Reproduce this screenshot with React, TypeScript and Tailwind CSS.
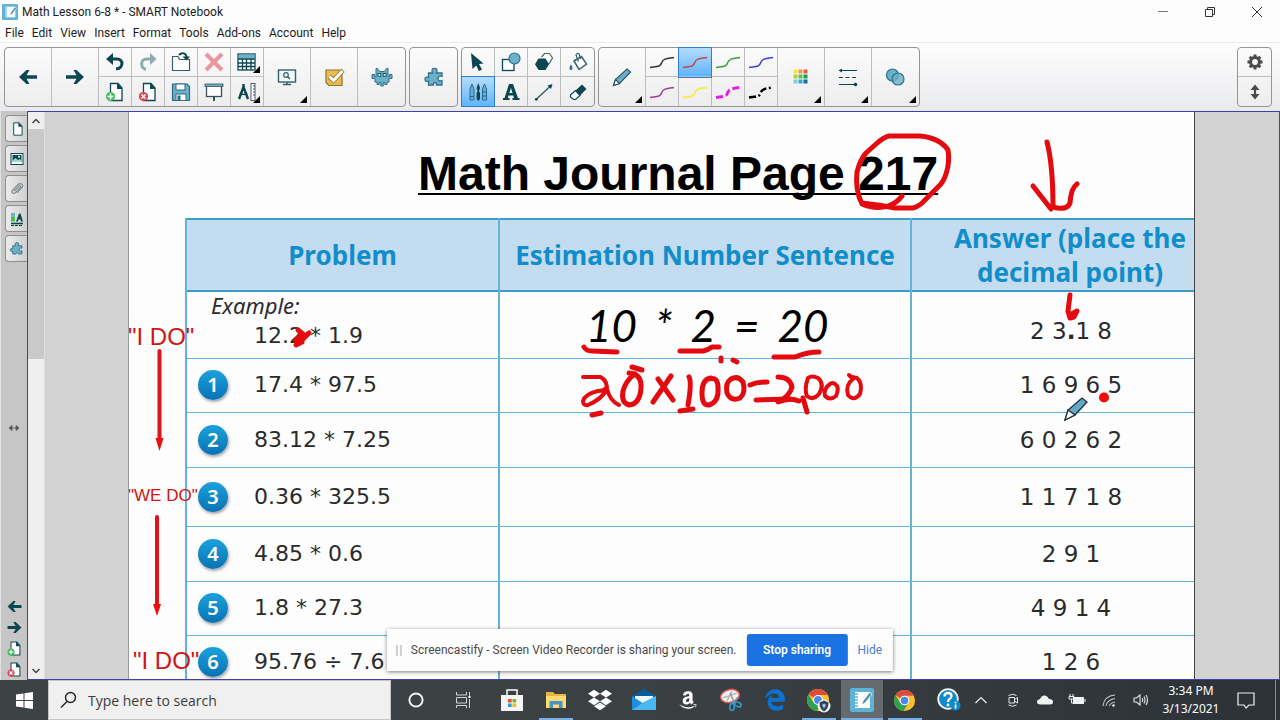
import type { ReactNode } from "react";
import { FaAmazon, FaDropbox } from "react-icons/fa";
import { FaEdgeLegacy } from "react-icons/fa6";

const DARK = "#0b4651";
const SKY = "#6cb0ca";

type IconProps = { children: ReactNode; size?: number; box?: number };

function Icon({ children, size = 22, box = 22 }: IconProps) {
  return (
    <svg aria-hidden="true" width={size} height={size} viewBox={`0 0 ${box} ${box}`} fill="none" className="shrink-0">
      {children}
    </svg>
  );
}

const ArrowLeft = ({ size = 22 }: { size?: number }) => (
  <Icon size={size}>
    <path d="M2 11 L9.5 4 H12.5 L9.5 9.2 H20 V12.8 H9.5 L12.5 18 H9.5 Z" fill={DARK} />
  </Icon>
);
const ArrowRight = ({ size = 22 }: { size?: number }) => (
  <Icon size={size}>
    <path d="M20 11 L12.5 4 H9.5 L12.5 9.2 H2 V12.8 H12.5 L9.5 18 H12.5 Z" fill={DARK} />
  </Icon>
);
const Undo = () => (
  <Icon>
    <path d="M7 8 H13 C20 8 19.500 18 12 17.800" stroke={DARK} strokeWidth="3" />
    <path d="M2 8 L9 2 V14 Z" fill={DARK} />
  </Icon>
);
const Redo = () => (
  <Icon>
    <path d="M14 8 H10 C3 8 3 17 9 18.500" stroke="#8fa9ae" strokeWidth="3" />
    <path d="M19.500 8 L13 2 V14 Z" fill="#8fa9ae" />
  </Icon>
);
const OpenFile = () => (
  <Icon>
    <path d="M2.500 5.500 H8 L9.500 8.500 H19.500 V19.500 H2.500 Z" fill="#fff" stroke="#33616d" strokeWidth="1.200" />
    <path d="M9 4 C12 1 16 2 16.500 6" stroke={DARK} strokeWidth="2" />
    <path d="M12.500 5.500 H20 L16.500 9.500 Z" fill={DARK} />
  </Icon>
);
const Cross = () => (
  <Icon>
    <path d="M3 3 L19 19 M19 3 L3 19" stroke="#ea969f" strokeWidth="4" />
  </Icon>
);
const TableIcon = () => (
  <Icon>
    <rect x="2" y="3" width="17" height="16" fill="#fff" stroke={DARK} strokeWidth="1.300" />
    <rect x="2.600" y="3.600" width="16" height="4" fill={SKY} />
    <path d="M2 8 H19 M2 12 H19 M2 15.500 H19 M6.500 8 V19 M10.500 8 V19 M15 8 V19" stroke={DARK} strokeWidth="1.300" />
  </Icon>
);
const PageIcon = ({ badge, size = 22 }: { badge?: "add" | "remove"; size?: number }) => (
  <Icon size={size}>
    <path d="M6.500 2.500 H14 L18 7 V19.500 H6.500 Z" fill="#fff" stroke={DARK} strokeWidth="1.300" />
    <path d="M13 2 L18.500 8 H13 Z" fill={DARK} />
    {badge && <circle cx="6.500" cy="15.500" r="4.600" fill={badge === "add" ? "#3fc05c" : "#dc4458"} />}
    {badge === "add" && <path d="M6.500 12.500 V18.500 M3.500 15.500 H9.500" stroke="#fff" strokeWidth="1.500" />}
    {badge === "remove" && <path d="M4.500 13.500 L8.500 17.500 M8.500 13.500 L4.500 17.500" stroke="#fff" strokeWidth="1.500" />}
  </Icon>
);
const Save = () => (
  <Icon>
    <path d="M2.500 3 H17 L19.500 5.500 V19.500 H2.500 Z" fill={SKY} stroke="#2c6c82" strokeWidth="1.200" />
    <rect x="6" y="3" width="9" height="6" fill="#fff" stroke="#2c6c82" />
    <rect x="6" y="13" width="10" height="6.500" fill="#fff" stroke="#2c6c82" />
    <rect x="7.500" y="14.500" width="3" height="5" fill="#2c6c82" />
  </Icon>
);
const Screen = () => (
  <Icon>
    <rect x="3.500" y="4.500" width="15" height="11" fill="#fff" stroke="#37525a" strokeWidth="1.300" />
    <rect x="2" y="3" width="18" height="2.500" fill={SKY} stroke="#37525a" strokeWidth=".8" />
    <path d="M11 16 V20" stroke="#37525a" strokeWidth="2" />
  </Icon>
);
const Measure = () => (
  <Icon>
    <path d="M7.500 3 V6 M7.500 6 L3 18 M7.500 6 L12 18" stroke={DARK} strokeWidth="2.400" />
    <path d="M4 12 C6 14 9 14 11 12" stroke={DARK} strokeWidth="1.500" />
    <rect x="15" y="2.500" width="4" height="17" fill="#fff" stroke="#557" />
    <path d="M17 5 H19 M17 8 H19 M17 11 H19 M17 14 H19" stroke="#557" />
  </Icon>
);
const Monitor = () => (
  <Icon>
    <rect x="2.500" y="4" width="17" height="12" fill="#f2fafc" stroke="#33616d" strokeWidth="1.400" />
    <circle cx="10" cy="9" r="2.300" stroke="#33616d" strokeWidth="1.200" />
    <path d="M11.500 10.500 L14 13 M11 16 V18 M7 18.500 H15" stroke="#33616d" strokeWidth="1.500" />
  </Icon>
);
const Check = () => (
  <Icon>
    <path d="M3 4 H19 V19.500 H6 L3 16.500 Z" fill="#ecbb52" stroke="#8d742f" strokeWidth="1.200" />
    <path d="M6.500 10.500 L10.500 14.500 L20 4.500" stroke="#8d742f" strokeWidth="4.600" />
    <path d="M6.500 10.500 L10.500 14.500 L19.500 5" stroke="#fff" strokeWidth="3" />
  </Icon>
);
const Robot = () => (
  <Icon>
    <path
      d="M5 2.500 H6.500 L8.500 5.500 H13.500 L15.500 2.500 H17 V10.500 H18.500 V8.500 H21 V12.500 H18 V16 H16 V18.500 H13.800 V16.500 H12.200 V20 H9.800 V16.500 H8.200 V18.500 H6 V16 H4 V12.500 H1 V8.500 H3.500 V10.500 H5 Z"
      fill={SKY}
      stroke="#2f7188"
      strokeWidth="1"
    />
    <rect x="7" y="7.500" width="2.800" height="2.800" fill="#fff" stroke="#1f5366" />
    <rect x="12.200" y="7.500" width="2.800" height="2.800" fill="#fff" stroke="#1f5366" />
  </Icon>
);
const Puzzle = ({ size = 22 }: { size?: number }) => (
  <Icon size={size}>
    <path
      d="M5.500 7 H9.500 C8 3 10 2.300 11.500 2.300 C13 2.300 15 3 13.500 7 H19 V10.500 C16 9.500 15 11 15 12.500 C15 14 16 15.500 19 14.500 V19 H13.500 C14 17 12.500 16.500 12 16.500 C11 16.500 10 17 10.500 19 H5.500 V15 C2.500 16 2 14.500 2 13 C2 11.500 3 10.500 5.500 11.500 Z"
      fill={SKY}
      stroke="#2f7188"
      strokeWidth="1.300"
    />
  </Icon>
);
const Pointer = () => (
  <Icon>
    <path d="M4 2 L16.500 12.500 L12 13 L15 18.500 L12 20 L9.200 14.500 L5.500 18 Z" fill={DARK} />
  </Icon>
);
const Shapes = () => (
  <Icon>
    <rect x="2.500" y="8.500" width="11.500" height="11" fill="#fff" stroke={DARK} strokeWidth="1.300" />
    <circle cx="14.500" cy="7.500" r="5.500" fill={SKY} stroke="#2f7188" strokeWidth="1.200" />
  </Icon>
);
const Hexagons = () => (
  <Icon>
    <path d="M8.500 6 L11.500 2.500 H16.500 L19.500 7 L16.500 12 L13 15" fill="#fff" stroke="#47666d" strokeWidth="1.200" />
    <path d="M5.500 7.500 H12.500 L16 13.300 L12.500 19 H5.500 L2 13.300 Z" fill={DARK} />
  </Icon>
);
const Bucket = () => (
  <Icon>
    <path d="M7 10 L14.500 5.500 L19.500 13 L12 18.500 Z" fill="#fff" stroke="#33616d" strokeWidth="1.500" />
    <path d="M11.500 10.500 L9 4 Q10 1.500 12 3 L14 8" stroke="#33616d" strokeWidth="1.200" />
    <path d="M4 13.500 C6.500 17 5.500 19 4 19 C2.500 19 1.500 17 4 13.500 Z" fill="#2f7188" />
  </Icon>
);
const Pens = () => (
  <Icon>
    <path d="M3 8 L5 3 L7 8 V19 H3 Z M15.500 8 L17.500 3 L19.500 8 V19 H15.500 Z" fill="#69afd3" stroke="#2b6a8c" />
    <path d="M3 15.500 H7 M15.500 11 H19.500 M15.500 15 H19.500" stroke="#2b6a8c" />
    <path d="M11.300 2 L13 7 L12 10 L13 12 V18 L11.300 20 L9.600 18 V12 L10.600 10 L9.600 7 Z" fill={DARK} />
  </Icon>
);
const TextTool = () => (
  <Icon>
    <path d="M9 3 H13 L18 17 H19.500 V19 H12.500 V17 H14 L13.200 14.500 H8.500 L7.800 17 H9.500 V19 H3 V17 H4.500 Z M11 7 L9.300 12 H12.500 Z" fill={DARK} fillRule="evenodd" />
  </Icon>
);
const LineTool = () => (
  <Icon>
    <path d="M3 18.500 L18 4.500" stroke="#33545c" strokeWidth="1.300" />
    <path d="M19.500 3 L14.500 4.500 L18 8 Z" fill={DARK} />
    <circle cx="3.300" cy="18.300" r="1.400" fill={DARK} />
  </Icon>
);
const Eraser = () => (
  <Icon>
    <path d="M8.500 9.500 L15 3.500 L19.500 8 L13 14.500 Z" fill={DARK} />
    <path d="M8.500 9.500 L3.500 14 V16 L6.500 18.500 H8.500 L13 14.500 Z" fill="#fff" stroke={DARK} strokeWidth="1.200" />
  </Icon>
);
const Pencil = ({ size = 22 }: { size?: number }) => (
  <Icon size={size}>
    <path d="M2.500 19.500 L4.500 13.500 L16 3 L19.500 6 L8.500 17.500 Z" fill={SKY} stroke="#2c5a6b" strokeWidth="1.200" />
    <path d="M2.500 19.500 L4.500 13.500 L8.500 17.500 Z" fill="#fff" stroke="#2c4a54" strokeWidth="1.100" />
  </Icon>
);
const Stroke = ({ color, width = 1.5, dash }: { color: string; width?: number; dash?: string }) => (
  <Icon size={26} box={26}>
    <path d="M1 18.500 C8 17.500 11.500 18 12.500 14 C14 9.500 18 9.500 25 8.500" stroke={color} strokeWidth={width} strokeDasharray={dash} />
  </Icon>
);
const swatches = ["#f2e63c", "#ee9a4c", "#e4604c", "#a9d34a", "#5cc25a", "#1e9f46", "#7fd0e8", "#3fa7cf", "#1b6aa5"];
const Palette = () => (
  <Icon>
    {swatches.map((c, i) => (
      <rect key={c} x={3.500 + (i % 3) * 5} y={3.500 + Math.floor(i / 3) * 5} width="4" height="4" fill={c} />
    ))}
  </Icon>
);
const LineStyles = () => (
  <Icon>
    <path d="M3 4.500 H20 M2 18.500 H18" stroke={DARK} strokeWidth="1.200" />
    <path d="M2 11.500 H20" stroke={DARK} strokeWidth="1.200" strokeDasharray="4 2.500" />
    <path d="M1.500 4.500 L5 2.500 V6.500 Z" fill={DARK} />
    <circle cx="18.500" cy="18.500" r="1.800" fill={DARK} />
  </Icon>
);
const Blend = () => (
  <Icon>
    <circle cx="7.500" cy="9" r="6" fill={SKY} stroke="#2f7188" strokeWidth="1.200" />
    <circle cx="13" cy="13" r="6" fill={SKY} fillOpacity=".8" stroke="#2f7188" strokeWidth="1.200" />
  </Icon>
);
const Gear = () => (
  <Icon>
    <circle cx="11" cy="11" r="4.400" stroke="#4a4a4a" strokeWidth="3" />
    <path d="M11 3.500 V6 M11 16 V18.500 M3.500 11 H6 M16 11 H18.500 M5.700 5.700 L7.500 7.500 M14.500 14.500 L16.300 16.300 M5.700 16.300 L7.500 14.500 M14.500 7.500 L16.300 5.700" stroke="#4a4a4a" strokeWidth="3" />
  </Icon>
);
const UpDown = () => (
  <Icon>
    <path d="M11 6 V16" stroke="#4a4a4a" strokeWidth="2.200" />
    <path d="M11 3.500 L15.500 9 H6.500 Z M11 18.500 L15.500 13 H6.500 Z" fill="#4a4a4a" />
  </Icon>
);
const Picture = () => (
  <Icon size={14} box={14}>
    <rect x="1" y="1.500" width="12" height="11" fill="#fff" stroke={DARK} />
    <rect x="2.500" y="3" width="9" height="7" fill={DARK} />
    <path d="M2.500 8.500 L5.500 6 L8 8 L10 7 L11.500 8.500 V10 H2.500 Z" fill="#9db" />
    <circle cx="9" cy="4.800" r="1" fill="#fff" />
  </Icon>
);
const Clip = () => (
  <Icon size={14} box={14}>
    <path d="M4 9 L9 4 Q10.500 3.500 10.500 5 L5 11 Q2.500 12 2 10 L2 9 L8 2.500 Q11 .5 12.500 3 Q13 4.500 12 5.500 L7 11" stroke="#7a8587" strokeWidth="1.100" />
  </Icon>
);
const Properties = () => (
  <Icon size={14} box={14}>
    <rect x="1" y="1" width="4" height="3.500" fill="#6cb0ca" />
    <rect x="1" y="4.500" width="4" height="5" fill="#4cc04e" />
    <path d="M6 9.500 L9 1.500 H10.500 L13 9.500 H11 L10.400 7.500 H8.400 L8 9.500 Z" fill={DARK} />
    <path d="M1 11.500 H13" stroke={DARK} strokeWidth="1.600" />
    <path d="M1 13.500 H13" stroke={DARK} strokeDasharray="3 1" />
  </Icon>
);

function Cell({ label, children, menu, active, wide }: { label: string; children: ReactNode; menu?: boolean; active?: boolean; wide?: boolean }) {
  return (
    <button
      type="button"
      aria-label={label}
      className={`relative flex items-center justify-center ${wide ? "w-[47px]" : "h-[29px] w-full"} ${active ? "bg-linear-to-b from-[#b4dcfb] to-[#5fb4fb] outline outline-[#2f7fd0]" : ""}`}
    >
      {children}
      {menu && <span className="absolute right-[3px] bottom-[3px] size-[7px] bg-black [clip-path:polygon(100%_0,100%_100%,0_100%)]" />}
    </button>
  );
}

const Pair = ({ children }: { children: ReactNode }) => (
  <div className="flex w-[33px] flex-col divide-y divide-[#bdbdbd]">{children}</div>
);
const Group = ({ children }: { children: ReactNode }) => (
  <div className="flex h-[60px] divide-x divide-[#bdbdbd] rounded-[4px] border border-[#959595] bg-linear-to-b from-[#fbfbfb] to-[#ededee]">
    {children}
  </div>
);

function Toolbar() {
  return (
    <div role="toolbar" className="flex h-[69px] shrink-0 items-center gap-[3px] border-t border-[#ebebeb] bg-linear-to-b from-[#fdfdfd] to-[#e9eaed] px-1">
      <Group>
        <Cell wide label="Previous page"><ArrowLeft /></Cell>
        <Cell wide label="Next page"><ArrowRight /></Cell>
        <Pair><Cell label="Undo"><Undo /></Cell><Cell label="Add page"><PageIcon badge="add" /></Cell></Pair>
        <Pair><Cell label="Redo"><Redo /></Cell><Cell label="Delete page"><PageIcon badge="remove" /></Cell></Pair>
        <Pair><Cell label="Open"><OpenFile /></Cell><Cell label="Save"><Save /></Cell></Pair>
        <Pair><Cell label="Delete"><Cross /></Cell><Cell label="Screen shade"><Screen /></Cell></Pair>
        <Pair><Cell label="Table" menu><TableIcon /></Cell><Cell label="Measurement tools" menu><Measure /></Cell></Pair>
        <Cell wide label="View screens" menu><Monitor /></Cell>
        <Cell wide label="Response"><Check /></Cell>
        <Cell wide label="Activities"><Robot /></Cell>
      </Group>
      <Group>
        <Cell wide label="Add-ons"><Puzzle /></Cell>
      </Group>
      <Group>
        <Pair><Cell label="Select"><Pointer /></Cell><Cell label="Pens" active><Pens /></Cell></Pair>
        <Pair><Cell label="Shapes"><Shapes /></Cell><Cell label="Text"><TextTool /></Cell></Pair>
        <Pair><Cell label="Regular polygons"><Hexagons /></Cell><Cell label="Lines"><LineTool /></Cell></Pair>
        <Pair><Cell label="Fill"><Bucket /></Cell><Cell label="Eraser"><Eraser /></Cell></Pair>
      </Group>
      <Group>
        <Cell wide label="Pen type" menu><Pencil /></Cell>
        <Pair><Cell label="Black pen"><Stroke color="#333" /></Cell><Cell label="Purple pen"><Stroke color="#9b3f9b" /></Cell></Pair>
        <Pair><Cell label="Red pen" active><Stroke color="#c8424c" /></Cell><Cell label="Yellow pen"><Stroke color="#f1ee54" width={2} /></Cell></Pair>
        <Pair><Cell label="Green pen"><Stroke color="#35a03c" /></Cell><Cell label="Magenta dashed pen"><Stroke color="#e31ee0" width={3} dash="7 3" /></Cell></Pair>
        <Pair><Cell label="Blue pen"><Stroke color="#3f3fd8" /></Cell><Cell label="Black dashed pen"><Stroke color="#000" width={2.500} dash="7 2.500 2 2.500" /></Cell></Pair>
        <Cell wide label="Colour" menu><Palette /></Cell>
        <Cell wide label="Line style" menu><LineStyles /></Cell>
        <Cell wide label="Transparency" menu><Blend /></Cell>
      </Group>
      <div className="mr-1 ml-auto">
        <Group>
          <Pair><Cell label="Customize toolbar"><Gear /></Cell><Cell label="Move toolbar"><UpDown /></Cell></Pair>
        </Group>
      </div>
    </div>
  );
}

const AppBadge = ({ size = 16 }: { size?: number }) => (
  <Icon size={size} box={24}>
    <rect width="24" height="24" rx="2" fill="#5fb3d6" />
    <path d="M5 4 H20 V20 H5 Z" fill="#fff" />
    <path d="M3 6 H8 M3 9 H8 M3 12 H8 M3 15 H8 M3 18 H8" stroke="#5fb3d6" strokeWidth="1.400" />
    <path d="M11.500 17 L13 13 L19.500 4.500 L22 6 L15 15 Z" fill="#3a8db3" stroke="#fff" strokeWidth=".8" />
  </Icon>
);

const menus = ["File", "Edit", "View", "Insert", "Format", "Tools", "Add-ons", "Account", "Help"];

function TitleBar() {
  return (
    <header className="shrink-0 bg-[#fdfdfd] font-['Roboto',sans-serif] text-[12px] leading-4 text-[#1c1c1c]">
      <div className="flex h-6 items-center gap-1 pl-[2px]">
        <AppBadge />
        <h1>Math Lesson 6-8 * - SMART Notebook</h1>
        <div className="ml-auto flex h-6">
          <button type="button" aria-label="Minimize" className="flex w-[47px] items-center justify-center">
            <Icon size={12} box={12}><path d="M1 5.500 H11" stroke="#777" /></Icon>
          </button>
          <button type="button" aria-label="Restore" className="flex w-[47px] items-center justify-center">
            <Icon size={12} box={12}><path d="M1.500 3.500 H8.500 V10.500 H1.500 Z M3.500 3.500 V1.500 H10.500 V8.500 H8.500" stroke="#333" /></Icon>
          </button>
          <button type="button" aria-label="Close" className="flex w-[47px] items-center justify-center">
            <Icon size={12} box={12}><path d="M1 1 L11 11 M11 1 L1 11" stroke="#333" /></Icon>
          </button>
        </div>
      </div>
      <nav className="flex h-[18px] items-center gap-2 pl-[5px]">
        {menus.map((m) => (
          <button type="button" key={m}>{m}</button>
        ))}
      </nav>
    </header>
  );
}

function SideBar() {
  const tabs: [string, ReactNode][] = [
    ["Page sorter", <PageIcon key="p" size={16} />],
    ["Gallery", <Picture key="g" />],
    ["Attachments", <Clip key="a" />],
    ["Properties", <Properties key="r" />],
    ["Add-ons", <Puzzle key="d" size={15} />],
  ];
  return (
    <aside className="flex w-[27px] shrink-0 flex-col border-l border-[#e2e2e2] bg-[#c6c6c6]">
      <div className="flex flex-col gap-[3px] pt-1 pl-1">
        {tabs.map(([label, icon]) => (
          <button type="button" key={label} aria-label={label} className="flex h-[27px] items-center justify-center rounded-l-[4px] border border-r-0 border-[#8f8f8f] bg-linear-to-r from-[#ececec] to-[#cfcfcf]">
            {icon}
          </button>
        ))}
      </div>
      <div className="flex flex-1 items-center justify-center pt-4 pb-5">
        <Icon size={10} box={10}><path d="M0 5 L3 2.500 V7.500 Z M10 5 L7 2.500 V7.500 Z M2 5 H8" fill="#555" stroke="#555" strokeWidth=".8" /></Icon>
      </div>
      <div className="flex flex-col items-center gap-1 pb-[2px]">
        <button type="button" aria-label="Previous page"><ArrowLeft size={17} /></button>
        <button type="button" aria-label="Next page"><ArrowRight size={17} /></button>
        <button type="button" aria-label="Add page"><PageIcon badge="add" size={17} /></button>
        <button type="button" aria-label="Delete page"><PageIcon badge="remove" size={17} /></button>
      </div>
    </aside>
  );
}

function ScrollBar() {
  return (
    <div className="flex w-[17px] shrink-0 flex-col border-r border-[#dedede] bg-[#efefef]">
      <button type="button" aria-label="Scroll up" className="flex h-[17px] shrink-0 items-center justify-center">
        <Icon size={10} box={10}><path d="M1.500 7 L5 3.500 L8.500 7" stroke="#444" strokeWidth="1.500" /></Icon>
      </button>
      <div className="h-[230px] bg-[#c9c9c9]" />
      <button type="button" aria-label="Scroll down" className="mt-auto flex h-[17px] shrink-0 items-center justify-center">
        <Icon size={10} box={10}><path d="M1.500 3 L5 6.500 L8.500 3" stroke="#444" strokeWidth="1.500" /></Icon>
      </button>
    </div>
  );
}

const rows = [
  { n: 1, problem: "17.4 * 97.5", answer: "1 6 9 6 5", height: "h-[54px]" },
  { n: 2, problem: "83.12 * 7.25", answer: "6 0 2 6 2", height: "h-[55px]" },
  { n: 3, problem: "0.36 * 325.5", answer: "1 1 7 1 8", height: "h-[59px]" },
  { n: 4, problem: "4.85 * 0.6", answer: "2 9 1", height: "h-[55px]" },
  { n: 5, problem: "1.8 * 27.3", answer: "4 9 1 4", height: "h-[54px]" },
  { n: 6, problem: "95.76 ÷ 7.6", answer: "1 2 6", height: "h-[55px]" },
];

const estimate = ["10", "*", "2", "=", "20"];

const cell = "border border-l-2 border-[#62b3d6] p-0";

function Worksheet() {
  return (
    <table className="ml-[56px] w-[1052px] table-fixed border-collapse border-2 border-[#3d9cc6] font-['DejaVu_Sans',sans-serif] text-[22px] leading-[26px] text-[#2b2b2b]">
      <colgroup>
        <col className="w-[313px]" />
        <col className="w-[412px]" />
        <col />
      </colgroup>
      <thead>
        <tr className="h-[72px] border-b-2 border-[#3d9cc6] bg-[#c4dcef] font-['Noto_Sans',sans-serif] text-[26px] leading-[34px] text-[#118dca]">
          <th className={cell}>Problem</th>
          <th className={cell}>Estimation Number Sentence</th>
          <th className={`${cell} pr-[7px]`}>Answer (place the<br />decimal point)</th>
        </tr>
      </thead>
      <tbody>
        <tr className="h-[67px]">
          <td className={`${cell} align-top`}>
            <div className="pl-6 font-['Noto_Sans',sans-serif] leading-[26px] italic">Example:</div>
            <div className="pl-[67px] leading-[36px]">12.2 * 1.9</div>
          </td>
          <td className={cell}>
            <div className="flex gap-[18px] pl-[86px] font-['Lato',sans-serif] text-[44px] leading-[64px] text-black italic">
              {estimate.map((part) => (
                <span key={part}>{part}</span>
              ))}
            </div>
          </td>
          <td className={`${cell} pr-[5px] pt-[12px] text-center text-[23px]`}>2 3<b>.</b>1 8</td>
        </tr>
        {rows.map((r) => (
          <tr key={r.n} className={r.height}>
            <td className={cell}>
              <div className="flex items-center gap-[26px] pl-[11px]">
                <span className="flex size-[30px] items-center justify-center rounded-full bg-linear-to-b from-[#1ba2dc] to-[#0a72b4] font-['Noto_Sans',sans-serif] text-[20px] leading-6 font-semibold text-white shadow-[1px_2px_3px_rgba(0,0,0,0.35)]">
                  {r.n}
                </span>
                <span>{r.problem}</span>
              </div>
            </td>
            <td className={cell} />
            <td className={`${cell} pr-[5px] text-center text-[23px]`}>{r.answer}</td>
          </tr>
        ))}
      </tbody>
    </table>
  );
}

function Ink() {
  return (
    <svg aria-hidden="true" width="1066" height="568" viewBox="129 112 1066 568" fill="none" className="pointer-events-none absolute top-0 left-0">
      <g stroke="#e30b0f" strokeWidth="5" strokeLinecap="round" strokeLinejoin="round">
        <path d="M902 196 Q897 203 888 206 Q876 210 862 204 Q855 190 857 172 Q860 160 866 153 L876 144 Q884 137 889 136 L920 136 Q940 138 948 150 Q950 162 946 174 Q943 183 938 187 L925 200 Q920 206 913 208 L895 208 Q880 205 862 203" />
        <path d="M1047 142 Q1053 165 1053 207 M1033 186 L1051 209 M1053 207 Q1067 211 1070 203 Q1071 188 1077 184" />
        <path d="M1070 295 L1068 311 L1070 318 L1074 317 L1077 311 L1070 315" />
        <path d="M584 347 Q586 351 592 351 L617 352 M680 351 H703 Q708 350 712 347 H719 M774 357 H795 Q807 352 819 352" />
        <path d="M721 358 V361 M733 360 L737 362" />
        <path d="M583 377 H600 Q606 379 607 387 Q604 391 598 391 Q585 394 583 401 Q583 406 588 405 Q602 399 607 389 Q610 401 619 405" strokeWidth="4" />
        <path d="M629 373 Q642 374 641 388 Q640 404 629 405 Q621 403 623 391 Q626 380 635 374 M632 367 L642 370 M592 415 L601 413" />
        <path d="M658 379 L673 400 M671 376 L653 402 M689 377 Q692 382 688 405 M680 411 L693 409" />
        <path d="M711 378 Q702 379 702 393 Q702 406 709 405 Q719 402 718 388 Q718 376 709 379" />
        <path d="M731 379 Q725 383 727 393 Q731 402 740 398 Q746 393 743 382 Q738 375 731 379" />
        <path d="M750 385 Q757 382 767 382 M756 400 L790 399" />
        <path d="M778 377 Q790 377 792 387 Q790 396 778 402 Q790 397 799 401 M803 398 L807 412" />
        <path d="M808 378 Q804 389 807 396 Q813 401 819 394 Q825 384 818 378 Q812 375 808 378" strokeWidth="4" />
        <path d="M830 384 Q823 389 825 396 Q830 401 836 396 Q840 387 835 384 Q832 382 830 384" strokeWidth="4" />
        <path d="M849 375 L853 379 Q845 385 848 395 Q854 402 860 394 Q863 383 857 378 L852 377" strokeWidth="4" />
        <path d="M298 330 L303 334 L296 340 L305 336 L309 333 L301 341 L296 345 L302 342" />
        <path d="M159.500 351 V440 M157 517 V606" stroke="#e01414" strokeWidth="4" />
      </g>
      <path d="M155.500 438 H163.500 L159.500 451 Z M153 604 H161 L157 616 Z" fill="#f00d0d" />
      <circle cx="1104" cy="397.500" r="5" fill="#f30b0b" />
      <path d="M1065 420 L1068 410 L1082 398 L1087 402 L1075 415 Z" fill="#62a7c6" stroke="#222f36" strokeWidth="1.300" />
      <path d="M1065 420 L1068 410 L1075 415 Z" fill="#fff" stroke="#222f36" strokeWidth="1.300" />
    </svg>
  );
}

function Canvas() {
  const note = "absolute font-['Liberation_Sans',sans-serif] whitespace-nowrap text-[#d21414]";
  return (
    <main className="flex min-w-0 flex-1 bg-[#d2d2d2] pr-[84px] pl-[84px]">
      <div className="relative min-w-0 flex-1 overflow-hidden border-r border-[#444] bg-[#fdfdfd] shadow-[-1px_0_0_#9a9a9a]">
        <h2 className="pt-8 pb-[14px] pl-[289px] font-['Liberation_Sans',sans-serif] text-[48px] leading-[60px] font-bold whitespace-nowrap text-black underline decoration-2 underline-offset-[3px] [text-decoration-skip-ink:none]">
          Math Journal Page 217
        </h2>
        <Worksheet />
        <p className={`${note} top-[211px] -left-px text-[24px] leading-7`}>"I DO"</p>
        <p className={`${note} top-[374px] -left-px text-[17px] leading-5`}>"WE DO"</p>
        <p className={`${note} top-[535px] left-1 text-[24px] leading-7`}>"I DO"</p>
        <Ink />
      </div>
    </main>
  );
}

function ShareBar() {
  return (
    <div role="status" className="absolute bottom-[49px] left-1/2 flex h-[42px] -translate-x-1/2 items-center bg-[#fdfdfd] pr-[11px] pl-[9px] font-['Roboto',sans-serif] text-[12px] whitespace-nowrap text-[#4a4a4a] shadow-[0_1px_4px_rgba(0,0,0,0.5)]">
      <span className="mr-[9px] h-[11px] w-[6px] border-x-2 border-[#cdcdcd]" />
      <span>Screencastify - Screen Video Recorder is sharing your screen.</span>
      <button type="button" className="ml-[10px] h-8 w-[101px] rounded-[3px] bg-[#1b73e3] font-semibold text-white">Stop sharing</button>
      <button type="button" className="ml-[10px] text-[#4a7fc9]">Hide</button>
    </div>
  );
}

const Chrome = () => (
  <>
    <circle cx="12" cy="12" r="11" fill="#fbc02d" />
    <path d="M12 12 L2.500 6.500 A11 11 0 0 1 21.500 6.500 L21.500 7 H12 Z" fill="#dd4b3e" />
    <path d="M2.500 6.500 A11 11 0 0 0 11 23 L16 14.500 L12 12 L7.500 14.500 Z" fill="#2fa24f" />
    <circle cx="12" cy="12" r="5" fill="#fff" />
    <circle cx="12" cy="12" r="3.900" fill="#4a87ee" />
  </>
);

function Task({ label, children, running, active, narrow }: { label: string; children: ReactNode; running?: boolean; active?: boolean; narrow?: boolean }) {
  return (
    <button
      type="button"
      aria-label={label}
      className={`flex h-full items-center justify-center ${narrow ? "w-[43px]" : "w-11"}`}
    >
      <span className={`flex h-full items-center justify-center border-b-2 pt-[2px] ${active ? "w-[42px] bg-[#656b6e]" : "w-[34px]"} ${running ? "border-[#76b0e2]" : "border-transparent"}`}>
        {children}
      </span>
    </button>
  );
}

function TaskBar() {
  return (
    <footer className="flex h-10 shrink-0 items-center bg-linear-to-r from-[#3d4245] via-[#3b4043] to-[#2c3238] text-white">
      <button type="button" aria-label="Start" className="flex h-full w-12 items-center justify-center">
        <Icon size={17} box={17}><path d="M0 2.500 L7.500 1.500 V8 H0 Z M8.500 1.300 L17 0 V8 H8.500 Z M0 9 H7.500 V15.500 L0 14.500 Z M8.500 9 H17 V17 L8.500 15.700 Z" fill="#fff" /></Icon>
      </button>
      <label className="flex h-full w-[343px] items-center gap-[10px] border border-[#c5c5c5] bg-[#f0f0f0] pl-[11px]">
        <Icon size={18} box={18}><circle cx="10.500" cy="6.500" r="5" stroke="#222" strokeWidth="1.400" /><path d="M7 10.500 L1 16.500" stroke="#222" strokeWidth="1.400" /></Icon>
        <input aria-label="Search" placeholder="Type here to search" className="min-w-0 flex-1 bg-transparent font-['Open_Sans',sans-serif] text-[14px] text-[#333] outline-none placeholder:text-[#3c3c3c]" />
      </label>
      <button type="button" aria-label="Cortana" className="flex h-full w-[49px] items-center justify-center">
        <Icon size={16} box={16}><circle cx="8" cy="8" r="6.600" stroke="#f2f2f2" strokeWidth="2" /></Icon>
      </button>
      <button type="button" aria-label="Task view" className="mr-1 flex h-full w-[46px] items-center justify-center">
        <Icon size={18} box={18}><path d="M2.500 1 V4 H12.500 V1 M2.500 6.500 H12.500 V12 H2.500 Z M2.500 17 V14.500 H12.500 V17 M15.500 1 V5 M15.500 8 V17" stroke="#d5d5d5" /><path d="M14.500 6 H16.500" stroke="#fff" strokeWidth="2" /></Icon>
      </button>
      <Task label="Microsoft Store">
        <Icon size={24} box={24}><path d="M7 7 V2 H17 V7" stroke="#fff" strokeWidth="1.500" /><path d="M1 7 H23 V23 H1 Z" fill="#f5f5f5" /><path d="M8 11 H11.700 V14.500 H8 Z" fill="#e5532a" /><path d="M12.500 11 H16.200 V14.500 H12.500 Z" fill="#7bb52c" /><path d="M8 15.500 H11.700 V19 H8 Z" fill="#2c9fe0" /><path d="M12.500 15.500 H16.200 V19 H12.500 Z" fill="#f5b921" /></Icon>
      </Task>
      <Task label="File Explorer" running>
        <Icon size={22}><path d="M1 3 H8 L10 5 H21 V19 H1 Z" fill="#e9b53a" /><path d="M1 7 H21 V19 H1 Z" fill="#fbdc75" /><path d="M4.500 19 V12 H17.500 V19 H14 V15.500 H8 V19 Z" fill="#4794c6" /></Icon>
      </Task>
      <Task label="Dropbox"><FaDropbox size={24} className="shrink-0" /></Task>
      <Task label="Mail">
        <Icon size={26} box={26}><path d="M1 9 L13 2 L25 9 V12 H1 Z" fill="#0a5a9c" /><path d="M4 9 H22 V16 H4 Z" fill="#eef6fc" /><path d="M1 9 L13 17 L25 9 V23 H1 Z" fill="#1f8fdd" /><path d="M1 23 L13 15 L25 9 V23 Z" fill="#4bb8f2" /></Icon>
      </Task>
      <Task label="Amazon" narrow><FaAmazon size={20} className="shrink-0" /></Task>
      <Task label="Snipping Tool">
        <Icon size={24} box={24}><ellipse cx="11" cy="8" rx="9.500" ry="6.500" fill="#f2f2f2" stroke="#d65252" strokeWidth="1.500" transform="rotate(-12 11 8)" /><path d="M4 10 L18 5 M8 13 L13 3" stroke="#b9b9b9" strokeWidth="1.500" /><path d="M11 5 L16 16 M19 9 L13 16" stroke="#8b9498" strokeWidth="1.500" /><ellipse cx="13" cy="19" rx="2.200" ry="3.500" stroke="#2f9ac6" strokeWidth="1.600" /><ellipse cx="19" cy="16.500" rx="3.300" ry="2.200" stroke="#2f9ac6" strokeWidth="1.600" transform="rotate(20 19 16.500)" /></Icon>
      </Task>
      <Task label="Microsoft Edge"><FaEdgeLegacy size={22} color="#0a72cf" className="shrink-0" /></Task>
      <Task label="Google Chrome, work profile" running narrow>
        <Icon size={25} box={25}><Chrome /><circle cx="18" cy="18" r="6.500" fill="#eef1f3" /><path d="M18 12.500 L22.500 14.500 Q22.500 21 18 23.500 Q13.500 21 13.500 14.500 Z" fill="#2f4658" /><path d="M18 15.500 L20 17 L18 20.500 L16 17 Z" fill="#a9c6dc" /></Icon>
      </Task>
      <Task label="SMART Notebook" running active narrow><AppBadge size={24} /></Task>
      <Task label="Google Chrome" running narrow><Icon size={23} box={24}><Chrome /></Icon></Task>
      <button type="button" aria-label="Help" className="ml-[10px] flex h-full w-[26px] items-center justify-center">
        <Icon size={24} box={24}><circle cx="11" cy="11" r="9.800" fill="#1389c9" stroke="#f2f8fb" strokeWidth="1.800" /><path d="M7.500 8.500 Q7.500 5 11 5 Q14.500 5 14.500 8 Q14.500 10 12.500 11 Q11 12 11 14" stroke="#fff" strokeWidth="2.300" /><circle cx="11" cy="17" r="1.400" fill="#fff" /><circle cx="18.500" cy="17.500" r="5" fill="#1389c9" /><path d="M18.500 16.500 V20.500 M18.500 13.800 V15.200" stroke="#fff" strokeWidth="1.600" /></Icon>
      </button>
      <div className="ml-auto flex h-full items-center">
        {trayIcons.map(([label, icon]) => (
          <button type="button" key={label} aria-label={label} className="flex h-full w-8 items-center justify-center">{icon}</button>
        ))}
        <div className="w-[68px] text-center text-[12px] leading-[18px]">
          <div>3:34 PM</div>
          <div>3/13/2021</div>
        </div>
        <button type="button" aria-label="Notifications" className="mr-2 flex h-full w-[42px] items-center justify-center">
          <Icon size={18} box={18}><path d="M1 2 H17 V14 H12 L9 17 L7 14 H1 Z" stroke="#eee" strokeWidth="1.200" /></Icon>
        </button>
        <div className="mr-1 h-full w-px bg-[#8a8d90]" />
      </div>
    </footer>
  );
}

const trayIcons: [string, ReactNode][] = [
  ["Show hidden icons", <Icon key="1" size={14} box={14}><path d="M1.500 10 L7 4.500 L12.500 10" stroke="#eee" strokeWidth="1.200" /></Icon>],
  ["Meet now", <Icon key="2" size={16} box={16}><path d="M4 5.500 H9.500 V11 H4 Z M9.500 7.500 L12.500 5.500 V11 L9.500 9 M3.500 3.500 Q8 1 11.500 3.500 M3.500 13 Q8 15.500 11.500 13" stroke="#e5e5e5" /></Icon>],
  ["OneDrive", <Icon key="3" size={18} box={18}><path d="M5 13.500 Q1 13.500 1 11 Q1 8.500 4 8 Q5.500 4 9 4.500 Q12 5 13 8 Q17 8 17 11 Q17 13.500 14 13.500 Z" fill="#f2f2f2" /></Icon>],
  ["Battery", <Icon key="4" size={18} box={18}><path d="M5 6 H16 V13 H5 Z" fill="#f2f2f2" /><path d="M17 8 V11 M2 3 V5 M5 3 V5 M1 5.500 H6 V8 H1 Z M3.500 8 V12 H6" stroke="#f2f2f2" /></Icon>],
  ["Wi-Fi", <Icon key="5" size={16} box={16}><path d="M2 14 Q3 4 14 3 M5 14 Q6 8 14 6.500 M8.500 14 Q9 11 14 10" stroke="#c8cacc" strokeWidth="1.100" /><circle cx="12.500" cy="13.500" r="1.200" fill="#eee" /></Icon>],
  ["Volume", <Icon key="6" size={16} box={16}><path d="M1 6 H3.500 L7 3 V13 L3.500 10 H1 Z M9 6 Q10.500 8 9 10 M11 4.500 Q13 8 11 11.500 M13 3 Q16 8 13 13" stroke="#e5e5e5" strokeWidth="1.100" /></Icon>],
];

export default function App() {
  return (
    <div className="relative flex h-screen flex-col overflow-hidden bg-[#c6c6c6] font-['Noto_Sans',sans-serif]">
      <TitleBar />
      <Toolbar />
      <div className="flex min-h-0 flex-1">
        <SideBar />
        <div className="flex min-h-0 min-w-0 flex-1 border border-[#4040b0]">
          <ScrollBar />
          <Canvas />
        </div>
      </div>
      <TaskBar />
      <ShareBar />
    </div>
  );
}
